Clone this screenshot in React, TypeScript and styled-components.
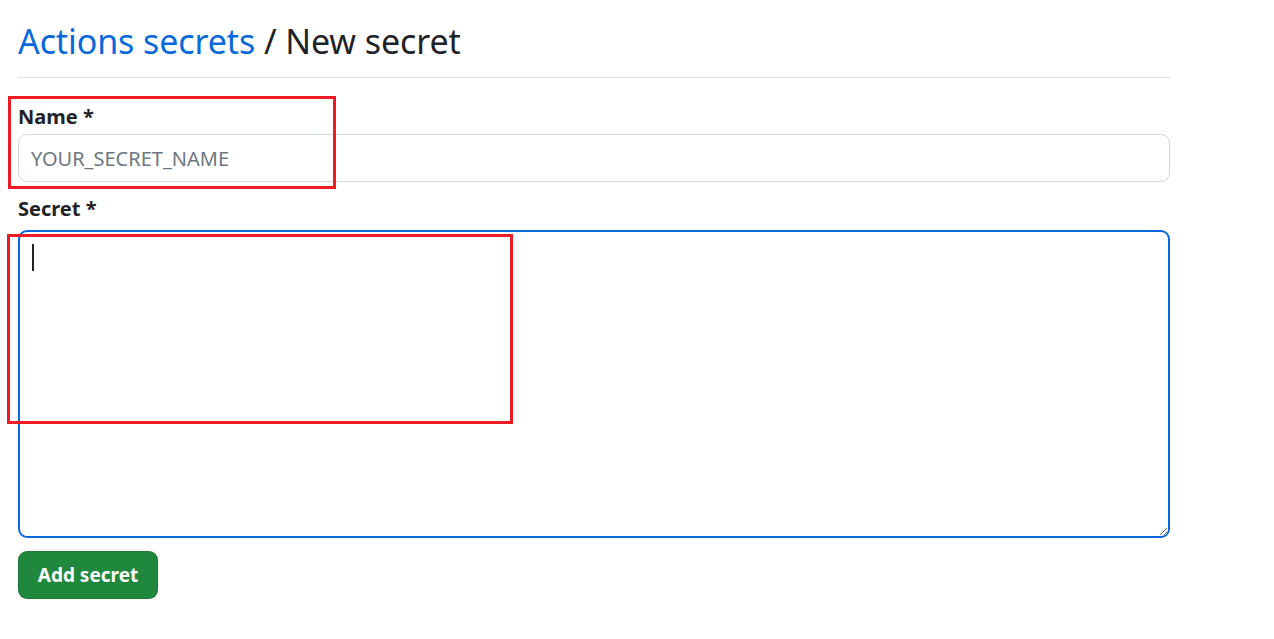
import React from "react";
import styled, { createGlobalStyle } from "styled-components";

const Global = createGlobalStyle`
  html, body { margin: 0; padding: 0; background: #ffffff; }
  body { font-family: "Noto Sans", "Open Sans", "Liberation Sans", sans-serif; color: #1f2328; }
  * { box-sizing: border-box; }
`;

const Page = styled.div`
  position: relative;
  width: 1274px;
  height: 639px;
  padding: 16px 104px 0 18px;
`;

const Subhead = styled.div`
  display: flex;
  align-items: baseline;
  height: 62px;
  border-bottom: 1px solid #d8dee4;
  margin-bottom: 24px;
`;

const Heading = styled.h2`
  margin: 0;
  font-size: 34px;
  font-weight: 400;
  line-height: 50px;
  letter-spacing: -0.1px;
  color: #1f2328;
`;

const Crumb = styled.a`
  color: #0969da;
  text-decoration: none;
`;

const Form = styled.form`
  display: flex;
  flex-direction: column;
`;

const Label = styled.label<{ $gap: number }>`
  display: block;
  font-size: 20px;
  font-weight: 700;
  line-height: 30px;
  height: 30px;
  margin-bottom: ${(p) => p.$gap}px;
  color: #1f2328;
`;

const Input = styled.input`
  width: 100%;
  height: 48px;
  border: 1px solid #d0d7de;
  border-radius: 9px;
  padding: 0 12px;
  font-family: inherit;
  font-size: 20px;
  color: #1f2328;
  outline: none;
  margin-bottom: 12px;
  &::placeholder { color: #6e7781; }
`;

const TextArea = styled.textarea`
  width: 100%;
  height: 308px;
  border: 2px solid #0969da;
  border-radius: 9px;
  padding: 11px 12px;
  font-family: inherit;
  font-size: 20px;
  color: #1f2328;
  outline: none;
  resize: vertical;
  display: block;
  margin-bottom: 13px;
`;

const Caret = styled.span`
  position: absolute;
  left: 32px;
  top: 244px;
  width: 2px;
  height: 27px;
  background: #1f2328;
`;

const Button = styled.button`
  align-self: flex-start;
  width: 140px;
  height: 48px;
  border: 1px solid rgba(31, 35, 40, 0.15);
  border-radius: 9px;
  background: #1f883d;
  color: #ffffff;
  font-family: inherit;
  font-size: 19px;
  font-weight: 700;
  padding: 0;
  cursor: pointer;
`;

const Annotation = styled.div<{ $l: number; $t: number; $w: number; $h: number }>`
  position: absolute;
  left: ${(p) => p.$l}px;
  top: ${(p) => p.$t}px;
  width: ${(p) => p.$w}px;
  height: ${(p) => p.$h}px;
  border: 3px solid #ed1c24;
  pointer-events: none;
`;

export default function App() {
  return (
    <>
      <Global />
      <Page>
        <Subhead>
          <Heading>
            <Crumb href="#">Actions secrets</Crumb> / New secret
          </Heading>
        </Subhead>
        <Form onSubmit={(e) => e.preventDefault()}>
          <Label $gap={2} htmlFor="name">Name *</Label>
          <Input id="name" placeholder="YOUR_SECRET_NAME" />
          <Label $gap={6} htmlFor="secret">Secret *</Label>
          <TextArea id="secret" />
          <Button type="submit">Add secret</Button>
        </Form>
        <Caret />
        <Annotation $l={8} $t={96} $w={328} $h={93} />
        <Annotation $l={7} $t={234} $w={506} $h={190} />
      </Page>
    </>
  );
}
